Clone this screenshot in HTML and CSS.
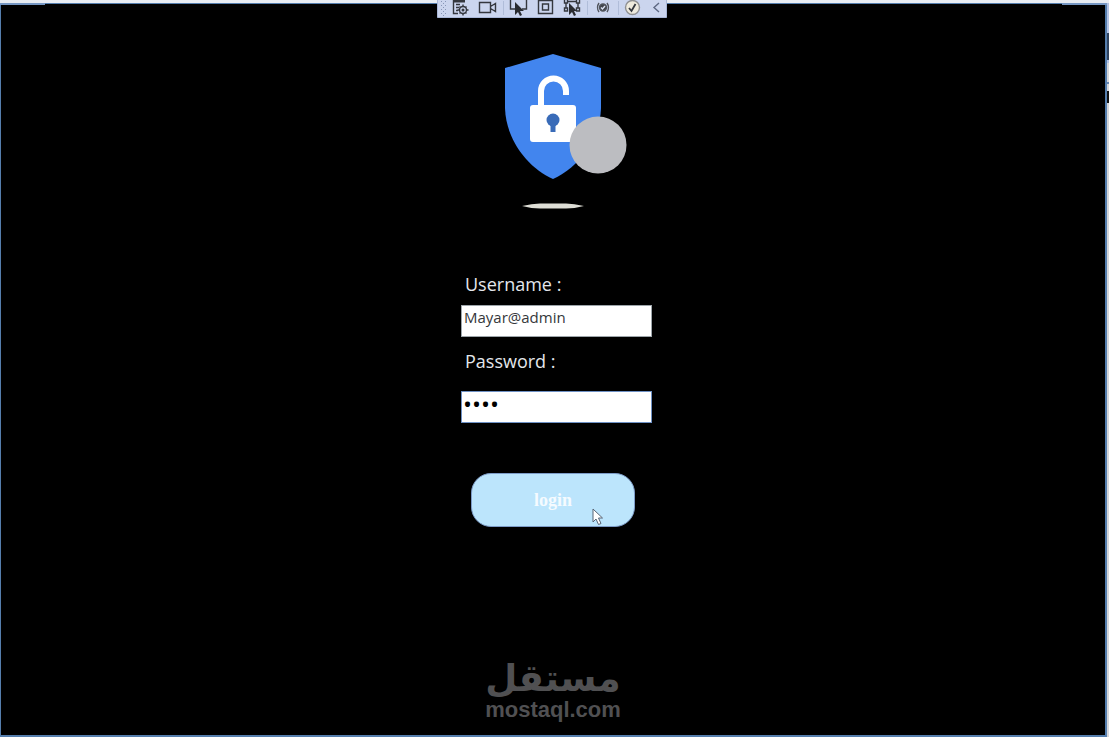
FILE: index.html
```
<!DOCTYPE html>
<html lang="en">
<head>
<meta charset="utf-8">
<title>Login</title>
<link rel="stylesheet" href="styles.css">
</head>
<body>
<div class="desktop">
  <main class="window">
    <svg class="shield" viewBox="0 0 126 156" aria-hidden="true">
      <path fill="#4285ee" d="M49 0 97 14V54C96 86 74 114 49 125 24 114 2 86 1 54V14Z"/>
      <path fill="none" stroke="#fff" stroke-width="6" d="M37 54V37a12.500 12.500 0 0 1 25 0v4"/>
      <rect x="26" y="51" width="46" height="37" rx="3" fill="#fff"/>
      <circle cx="49" cy="66" r="6.500" fill="#396bb8"/>
      <path fill="#396bb8" d="M46.500 68h5v10h-5z"/>
      <circle cx="94" cy="91" r="28.500" fill="#bcbdc1"/>
      <path fill="#deded6" d="M18 152Q28 149.500 36 149.500H62Q70 149.500 80 152 70 154.500 62 154.500H36Q28 154.500 18 152Z"/>
    </svg>
    <form class="login">
      <div class="fields">
        <label class="label" for="username">Username :</label>
        <input class="input" id="username" type="text" value="Mayar@admin">
        <label class="label label-password" for="password">Password :</label>
        <input class="input input-active" id="password" type="password" value="1234">
      </div>
      <button class="submit" type="button">login
        <svg class="cursor" viewBox="0 0 12 18" aria-hidden="true"><path fill="#fff" stroke="#596575" d="M1 1v13l3-3 2.500 5.500 2.500-1-2.500-5.500h4Z"/></svg>
      </button>
    </form>
    <footer class="brand">
      <span class="brand-name" lang="ar" dir="rtl">مستقل</span>
      <span class="brand-site">mostaql.com</span>
    </footer>
  </main>
  <div class="edge"><span class="edge-mark"></span><span class="edge-line"></span><span class="edge-dark"></span></div>
  <div class="caption-left"></div>
  <div class="caption-right"></div>
  <svg class="toolbar" viewBox="0 0 230 18" role="img" aria-label="Debug toolbar">
    <path fill="#cbd5ee" stroke="#a9b7d7" d="M.5-1h229v18.500H.5Z"/>
    <path stroke="#8796b7" stroke-dasharray="1 3" d="M4.500 1v15M8.500 1v15"/>
    <path stroke="#8796b7" stroke-dasharray="1 3" d="M6.500 3v13"/>
    <path stroke="#b0bdd9" d="M66.500 1v14M150.500 1v14M181.500 1v14"/>
    <g fill="none" stroke="#34373e" stroke-width="1.400">
      <path d="M16.500 0v13.500H21M19 4.500h4M19 7.500h3M19 10.500h2"/>
      <path stroke-width="3" d="M16 1h12"/>
      <circle cx="26" cy="10" r="3.500"/><circle cx="26" cy="10" r=".8"/>
      <path d="M26 4.500v2M26 13.500v2M20.500 10h2M29.500 10h2M22.500 6.500l1 1M29.500 6.500l-1 1M22.500 13.500l1-1M29.500 13.500l-1-1"/>
      <path d="M42.500 2.500h11v10h-11ZM53.500 6.500l5-3v8l-5-3"/>
      <path d="M78 9h-4.500V0M89.500 0v9H85M101.500.5h14v13h-14ZM105.500 4h6v6h-6Z"/>
      <path d="M127.500 0v3h3V0M139.500 0v3h3V0M130.500 1.500h9M129 3v5M141 3v5M127.500 8h3v3h-3ZM139.500 8h3v3h-3Z"/>
    </g>
    <path fill="#292b30" d="M78 2v13l3-3 2 4 2-1-2-4h4ZM132 3v12l3-3 2 4 2-1-2-4h3Z"/>
    <g fill="none" stroke="#50545c" stroke-width="1.400">
      <path d="M162 3q-3 4.500 0 9M170 3q3 4.500 0 9"/>
      <circle cx="166" cy="7.500" r="3.500" fill="#41454c"/>
      <path stroke="#dce3f4" d="m164 7.500 1.500 1.500 2.500-3"/>
      <circle cx="195.500" cy="7.500" r="7" fill="#eeeadd" stroke="#8f9092"/>
      <path stroke="#34373e" stroke-width="1.800" d="m192 8 2.500 3 4-7"/>
      <path stroke="#5d6883" d="m222 3-5 4.500 5 4.500"/>
    </g>
  </svg>
</div>
</body>
</html>
```
FILE: styles.css
```
* { box-sizing: border-box; }

body {
  margin: 0;
  background: #000;
  font-family: "Noto Sans", sans-serif;
}

.desktop {
  position: relative;
  display: grid;
  grid-template-columns: 1fr 2px;
  min-height: 100vh;
  padding-top: 3px;
  background: #e9edf3;
}

.window {
  display: flex;
  flex-direction: column;
  align-items: center;
  padding: 50px 0 12px;
  border: solid #557ead;
  border-width: 1px 2px 2px 1px;
  background: #000;
}

.shield {
  display: block;
  flex: none;
  width: 126px;
  height: 156px;
  margin-left: 28px;
}

.login {
  display: flex;
  flex-direction: column;
  align-items: center;
  width: 198px;
  margin-top: 60px;
}

.fields {
  display: flex;
  flex-direction: column;
  width: 100%;
  padding-left: 7px;
}

.label {
  padding-left: 4px;
  color: #e4e7ec;
  font-family: "Open Sans", sans-serif;
  font-size: 18px;
  line-height: 28px;
}

.label-password { margin-top: 10px; }

.input {
  width: 100%;
  height: 32px;
  margin-top: 7px;
  padding: 0 2px 8px;
  border: 1px solid #9da5aa;
  border-radius: 0;
  outline: 0;
  background: #fff;
  color: #35373b;
  font-family: "Open Sans", sans-serif;
  font-size: 15px;
}

.input-active {
  margin-top: 16px;
  padding: 0 1px 8px;
  border-color: #6e91c5;
  color: #000;
  font-size: 24px;
}

.submit {
  position: relative;
  width: 164px;
  height: 54px;
  margin-top: 50px;
  border: 1px solid #7d9cc8;
  border-radius: 20px;
  background: #bce5fc;
  color: #f5fbff;
  font-family: "Liberation Serif", serif;
  font-size: 18px;
  font-weight: 700;
}

.cursor {
  position: absolute;
  right: 30px;
  bottom: 0;
  width: 12px;
  height: 18px;
}

.brand {
  display: flex;
  flex-direction: column;
  align-items: center;
  margin-top: auto;
  color: #505052;
  font-weight: 700;
}

.brand-name {
  font-family: "DejaVu Sans", sans-serif;
  font-size: 37px;
  line-height: 36px;
}

.brand-site {
  font-family: "Liberation Sans", sans-serif;
  font-size: 22px;
  line-height: 26px;
}

.edge {
  display: flex;
  flex-direction: column;
  padding-top: 30px;
  background: linear-gradient(#b5c4e5 0 60px, #d6d7db 60px);
}

.edge-mark { height: 27px; background: #30435e; }
.edge-line { height: 2px; margin-top: 22px; background: #6685b0; }
.edge-dark { height: 12px; margin-top: 7px; background: #111; }

.caption-left,
.caption-right {
  position: absolute;
  top: 3px;
  left: 0;
  width: 45px;
  height: 2px;
  background: #7798c4;
}

.caption-right {
  right: 2px;
  left: auto;
}

.toolbar {
  position: absolute;
  top: 0;
  left: 50%;
  width: 230px;
  height: 18px;
  margin-left: -118px;
}
```
